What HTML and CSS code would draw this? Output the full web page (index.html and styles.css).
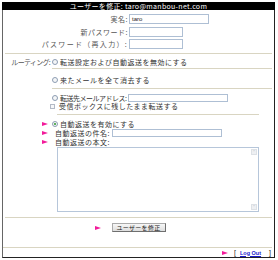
FILE: index.html
```html
<!DOCTYPE html>
<html lang="ja">
<head>
<meta charset="utf-8">
<title>ユーザーを修正</title>
<link rel="stylesheet" href="styles.css">
</head>
<body>
<div class="box">
  <div class="head">ユーザーを修正: taro@manbou-net.com</div>
  <div class="fields">
    <div class="frow"><span class="flabel">実名:</span><span class="inp w80">taro</span></div>
    <div class="frow"><span class="flabel">新パスワード:</span><span class="inp w54"></span></div>
    <div class="frow"><span class="flabel wide">パスワード（再入力）:</span><span class="inp w54"></span></div>
  </div>
  <div class="sep"></div>
  <div class="routing">
    <div class="rlabel">ルーティング:</div>
    <div class="opts">
      <div class="opt o1"><span class="radio"></span>転送設定および自動返送を無効にする</div>
      <div class="opt o2"><span class="radio"></span>来たメールを全て消去する</div>
      <div class="o3">
        <div class="opt l1"><span class="radio"></span><span class="tight">転送先メールアドレス:</span><span class="inp w100"></span></div>
        <div class="opt l2"><span class="check"></span>受信ボックスに残したまま転送する</div>
      </div>
    </div>
  </div>
  <div class="auto">
    <span></span>
    <div class="aline"></div>
    <span class="tri"></span>
    <div class="arow a1"><span class="radio on"></span>自動返送を有効にする</div>
    <span class="tri"></span>
    <div class="arow a2">自動返送の件名:<span class="inp w110"></span></div>
    <span class="tri"></span>
    <div class="arow a3">自動返送の本文:</div>
    <span></span>
    <div class="ta">
      <div class="sbar"><span class="sbtn">&#x02C4;</span><span class="sbtn">&#x02C5;</span></div>
    </div>
  </div>
  <div class="sep s2"></div>
  <div class="submit">
    <span class="tri"></span>
    <span class="btn">ユーザーを修正</span>
    <span></span>
  </div>
  <div class="sep2"></div>
  <div class="logout">
    <span class="tri"></span>
    <span class="br">[</span><a class="lo" href="#">Log Out</a><span class="br">]</span>
  </div>
</div>
</body>
</html>
```
FILE: styles.css
```css
html, body {
  margin: 0;
  background: #fff;
}
body {
  padding: 2px 0 0 2px;
  font-family: "Noto Sans CJK JP", "Noto Sans", sans-serif;
  font-size: 7px;
  letter-spacing: 0.5px;
  color: #333;
}
.box {
  width: 271px;
  height: 255px;
  border-left: 1px solid #666;
  border-right: 1px solid #222;
  border-bottom: 1px solid #222;
  display: flex;
  flex-direction: column;
}
.head {
  height: 8px;
  line-height: 8px;
  margin: 0 -1px;
  background: #000;
  color: #fff;
  text-align: center;
  white-space: nowrap;
  letter-spacing: 0.3px;
}
.fields {
  padding-top: 4px;
  display: flex;
  flex-direction: column;
  gap: 2.5px;
}
.frow {
  display: flex;
  align-items: center;
  height: 10px;
}
.flabel {
  width: 125px;
  text-align: right;
  white-space: nowrap;
  margin-right: 1px;
  line-height: 8px;
  color: #555;
}
.flabel.wide {
  letter-spacing: 1.3px;
}
.inp {
  display: inline-block;
  box-sizing: border-box;
  height: 10px;
  border: 1px solid #aebfd4;
  background: #fff;
  font-family: "Liberation Sans", sans-serif;
  font-size: 6px;
  letter-spacing: 0;
  line-height: 8px;
  padding: 0 2px;
  color: #222;
}
.w80 { width: 80px; }
.w54 { width: 54px; }
.w100 { width: 100px; height: 8px; }
.w110 { width: 110px; height: 8px; margin-left: 2px; }
.sep {
  height: 1px;
  margin: 4px 2px 0 2px;
  background: #d9d5c2;
}
.routing {
  display: flex;
}
.rlabel {
  width: 49px;
  box-sizing: border-box;
  padding: 4px 2px 0 0;
  line-height: 8px;
  text-align: right;
  white-space: nowrap;
  letter-spacing: -0.7px;
  color: #555;
}
.opts {
  flex: 1;
  margin-right: 2px;
}
.opt {
  display: flex;
  align-items: center;
  line-height: 8px;
  white-space: nowrap;
}
.o1 {
  padding: 4px 0 2px;
  border-bottom: 1px solid #d9d5c2;
}
.o2 {
  padding: 7px 0 4px;
  border-bottom: 1px solid #d9d5c2;
}
.o3 {
  padding-top: 4px;
}
.l1 { height: 9px; }
.l2 { height: 8px; }
.tight {
  letter-spacing: -0.5px;
  margin-right: 2px;
}
.radio {
  display: inline-block;
  box-sizing: border-box;
  width: 6px;
  height: 6px;
  border: 1px solid #8d9db3;
  border-radius: 50%;
  background: #f4f6f8;
  margin-right: 2px;
  position: relative;
}
.radio.on::after {
  content: "";
  position: absolute;
  left: 1px;
  top: 1px;
  width: 2px;
  height: 2px;
  border-radius: 50%;
  background: #2c9a2c;
}
.check {
  display: inline-block;
  box-sizing: border-box;
  width: 5px;
  height: 5px;
  border: 1px solid #b3bac6;
  background: #f6f7f9;
  margin: 0 4px 0 -2px;
}
.auto {
  margin-top: 4px;
  padding: 0 15px 0 39px;
  display: grid;
  grid-template-columns: 6px 1fr;
  column-gap: 4px;
  align-items: center;
}
.aline {
  height: 1px;
  margin: 0 0 5px 5px;
  background: #d9d5c2;
}
.tri {
  display: inline-block;
  width: 0;
  height: 0;
  border-left: 6px solid #f21b9a;
  border-top: 2.5px solid transparent;
  border-bottom: 2.5px solid transparent;
}
.arow {
  display: flex;
  align-items: center;
  line-height: 8px;
  white-space: nowrap;
}
.a1 { height: 8px; }
.a2 { height: 9.5px; padding-left: 3px; }
.a3 { height: 9px; padding-left: 3px; }
.ta {
  grid-column: 2;
  margin: 0.5px 0 0 5px;
  height: 65px;
  box-sizing: border-box;
  border: 1px solid #b6c6da;
  display: flex;
  justify-content: flex-end;
  padding: 1px;
}
.sbar {
  width: 6px;
  display: flex;
  flex-direction: column;
  justify-content: space-between;
}
.sbtn {
  height: 6px;
  background: #eef0f3;
  border: 1px solid #dde1e6;
  box-sizing: border-box;
  font-family: "DejaVu Sans", sans-serif;
  font-size: 5px;
  letter-spacing: 0;
  line-height: 4px;
  text-align: center;
  color: #b9bec6;
}
.s2 { margin-top: 5px; }
.submit {
  display: grid;
  grid-template-columns: 1fr auto 1fr;
  align-items: center;
  padding-top: 5px;
}
.submit .tri {
  justify-self: end;
  margin-right: 11px;
}
.btn {
  width: 54px;
  height: 9px;
  box-sizing: border-box;
  border: 1px solid #6f6f6f;
  border-top-color: #aaa;
  border-left-color: #aaa;
  background: linear-gradient(#f7f7f7, #dedede);
  font-size: 6px;
  letter-spacing: 0.3px;
  line-height: 7px;
  text-align: center;
  color: #222;
}
.sep2 {
  height: 1px;
  margin: 15px 2px 0 0;
  background: #d9d5c2;
}
.logout {
  height: 9px;
  display: flex;
  justify-content: flex-end;
  align-items: center;
  padding-right: 3px;
}
.logout .tri {
  margin-right: 6px;
}
.br {
  font-family: "Liberation Sans", sans-serif;
  font-size: 7px;
  letter-spacing: 0;
  color: #222;
  line-height: 8px;
}
.lo {
  font-family: "Liberation Sans", sans-serif;
  font-weight: bold;
  font-size: 5.5px;
  letter-spacing: 0;
  color: #1a1acc;
  text-decoration: underline;
  margin: 0 8px 0 4px;
}
```
